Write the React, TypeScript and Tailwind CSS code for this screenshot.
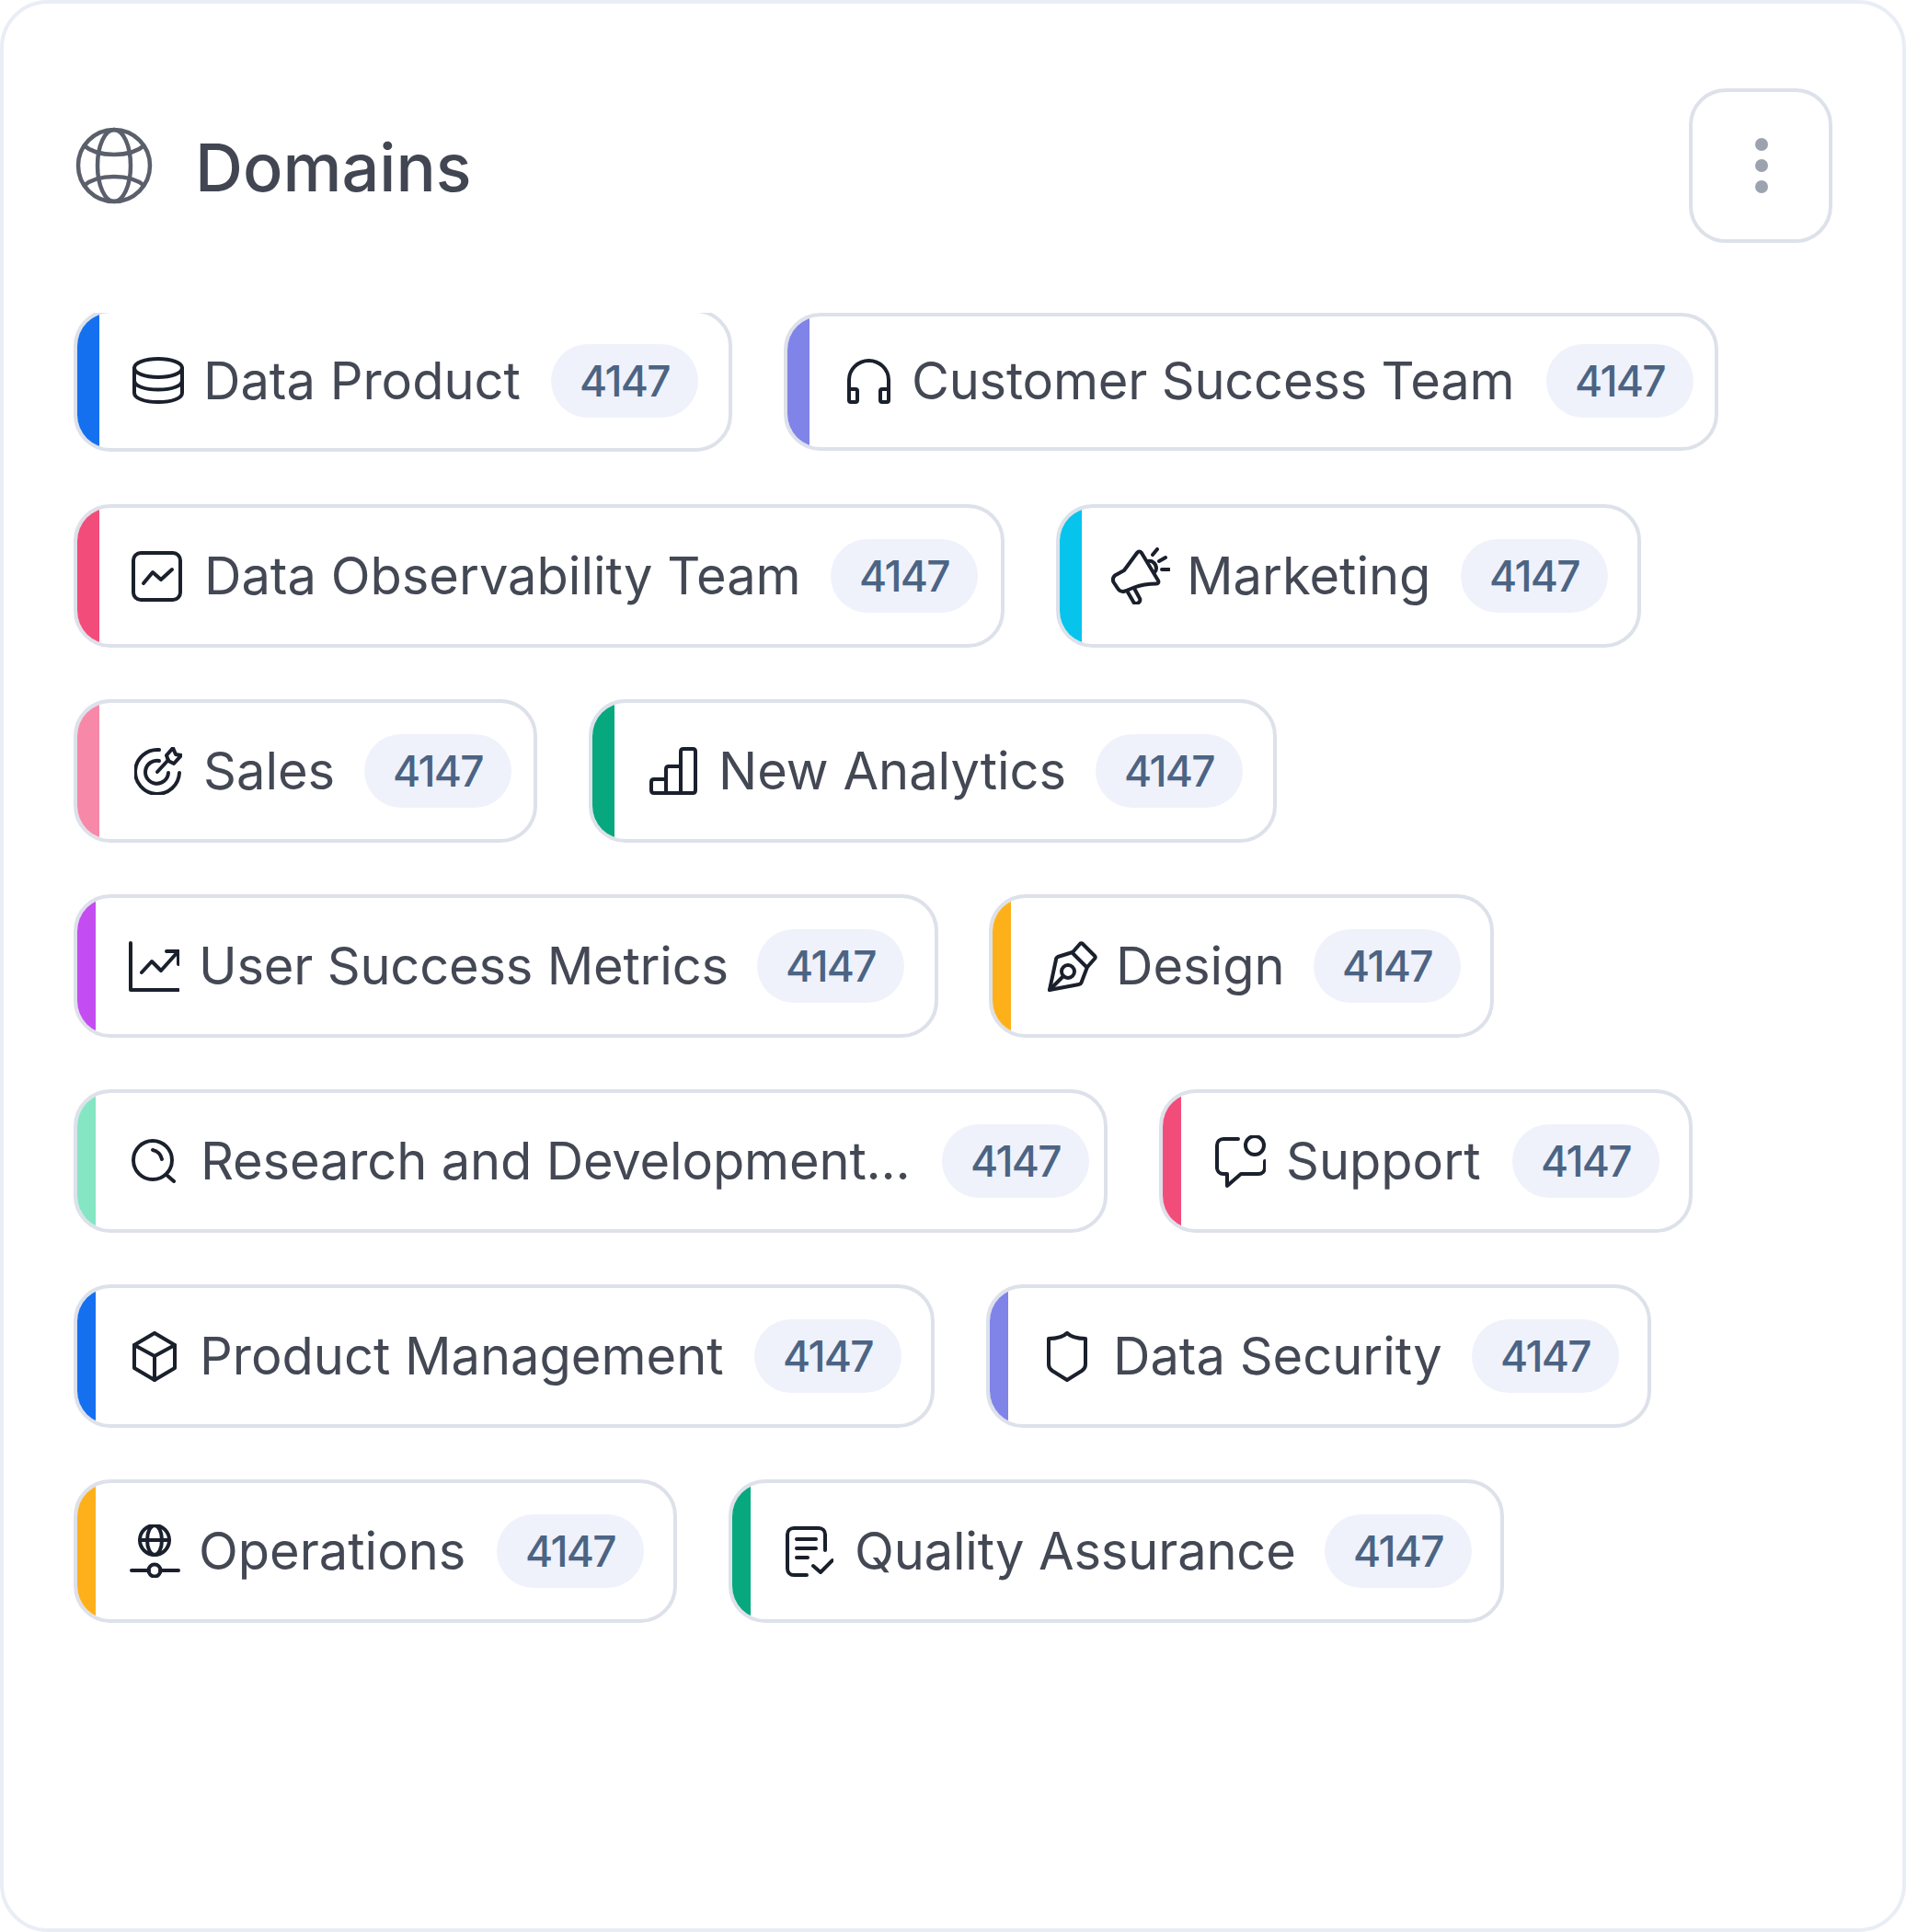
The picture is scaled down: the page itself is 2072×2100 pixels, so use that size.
import type { ReactNode } from 'react';

const stroke = {
  fill: 'none',
  stroke: '#1a202c',
  strokeWidth: 4,
  strokeLinecap: 'round' as const,
  strokeLinejoin: 'round' as const,
};

function Icon({ w, h, children }: { w: number; h: number; children: ReactNode }) {
  return (
    <svg width={w} height={h} viewBox={`0 0 ${w} ${h}`} className="flex-shrink-0" {...stroke}>
      {children}
    </svg>
  );
}

const DatabaseIcon = () => (
  <Icon w={56} h={51}>
    <ellipse cx="28" cy="12" rx="26" ry="10" />
    <path d="M2 12v27c0 6 11 10 26 10s26-4 26-10V12" />
    <path d="M2 25.5c0 6 11 10 26 10s26-4 26-10" />
  </Icon>
);

const HeadsetIcon = () => (
  <Icon w={49} h={49}>
    <path d="M3 35V23a21.500 21 0 0 1 43 0v12" />
    <rect x="3" y="33" width="9" height="14" rx="2" />
    <rect x="37" y="33" width="9" height="14" rx="2" />
  </Icon>
);

const ChartSquareIcon = () => (
  <Icon w={55} h={55}>
    <rect x="2" y="2" width="51" height="51" rx="8" />
    <path d="M13 35l10-12 9 8 12-11" />
  </Icon>
);

const MegaphoneIcon = () => (
  <Icon w={64} h={62}>
    <path d="M14 25L28 6c1.500-2 3.500-2 5 0l18 30c1 2 0 3.500-2 3.500-8 0-16 1-24 4l-10 4c-3 1-6 0-8-3l-4-6c-2-3-1-6 1-8z" />
    <path d="M17 47l7 12c1 2 3 2.500 5 1.500s3-3 2-5l-6-11" />
    <path d="M40 15c5-1 9 3 9 8 0 2-1 3-2 4" />
    <path d="M45 8l5-6M52 15l7-4M55 24h8" />
  </Icon>
);

const TargetIcon = () => (
  <Icon w={52} h={52}>
    <path d="M27 3a24 24 0 1 0 22 25" />
    <path d="M27 15a12.500 12.500 0 1 0 10 13" />
    <path d="M25 27l12-13" />
    <path d="M37 15l-2-6 7-8 3 7 6 1-8 9z" />
  </Icon>
);

const BarsIcon = () => (
  <Icon w={52} h={52}>
    <path d="M34 50V5c0-2 1-3 3-3h10c2 0 3 1 3 3v42c0 2-1 3-3 3H5c-2 0-3-1-3-3V38c0-2 1-3 3-3h13" />
    <path d="M18 50V24c0-2 1-3 3-3h13" />
  </Icon>
);

const TrendIcon = () => (
  <Icon w={55} h={55}>
    <path d="M2 2v51h52" />
    <path d="M14 34l11-12 10 10 18-20" />
    <path d="M41 11h13v14" />
  </Icon>
);

const PenIcon = () => (
  <Icon w={54} h={55}>
    <path d="M35 3c1-1 2-1 3 0l13 13c1 1 1 2 0 3l-7 8c-1 1-2 1-3 0L28 14c-1-1-1-2 0-3z" />
    <path d="M27 12l-16 5c-1 .500-2 1-2 3L2 53l32-6c1 0 2-1 2.500-2L43 28" />
    <path d="M2 53l15-15" />
    <circle cx="22" cy="33" r="7" />
  </Icon>
);

const SearchIcon = () => (
  <Icon w={48} h={48}>
    <circle cx="23" cy="23" r="21" />
    <path d="M38 39l8 7" />
    <path d="M23 12c5 1 9 5 10 10" />
  </Icon>
);

const SupportIcon = () => (
  <Icon w={55} h={57}>
    <circle cx="43" cy="11" r="10" />
    <path d="M25 4H9C5 4 2 7 2 11v24c0 4 3 7 7 7h4v13l15-13h19c4 0 7-3 7-7v-7" />
  </Icon>
);

const CubeIcon = () => (
  <Icon w={48} h={55}>
    <path d="M24 2l22 13v25L24 53 2 40V15z" />
    <path d="M2 15l22 12 22-12M24 27v26" />
  </Icon>
);

const ShieldIcon = () => (
  <Icon w={44} h={55}>
    <path d="M22 2c-4 4-10 6-20 6v28c0 3 1 5 4 7l16 10 16-10c3-2 4-4 4-7V8c-10 0-16-2-20-6z" />
  </Icon>
);

const NetworkIcon = () => (
  <Icon w={55} h={58}>
    <circle cx="27" cy="17" r="16" />
    <ellipse cx="27" cy="17" rx="8" ry="16" />
    <path d="M11 17h32" />
    <circle cx="27" cy="50" r="6.500" />
    <path d="M2 50h19M33 50h20" />
  </Icon>
);

const ReportIcon = () => (
  <Icon w={52} h={55}>
    <path d="M23 53H9c-4 0-7-3-7-7V9c0-4 3-7 7-7h27c4 0 7 3 7 7v17" />
    <path d="M12 14h21M12 24h21M12 34h12" />
    <path d="M30 43l8 7 13-13" />
  </Icon>
);

type Domain = {
  label: string;
  icon: ReactNode;
  chip: string;
  bar: string;
  iconGap: string;
  textGap: string;
  end: string;
};

const rows: Domain[][] = [
  [
    { label: 'Data Product', icon: <DatabaseIcon />, chip: 'w-[716px] -mt-[4px] h-[155px]', bar: 'w-[24px] bg-[#1570ef]', iconGap: 'ml-[36px]', textGap: 'ml-[21px]', end: 'mr-[33px]' },
    { label: 'Customer Success Team', icon: <HeadsetIcon />, chip: 'w-[1016px] -ml-[1px] h-[150px]', bar: 'w-[24px] bg-[#8083e8]', iconGap: 'ml-[40px] mb-[2px]', textGap: 'ml-[22px] mb-[2px] tracking-[-0.2px]', end: 'mr-[23px] mb-[2px]' },
  ],
  [
    { label: 'Data Observability Team', icon: <ChartSquareIcon />, chip: 'w-[1012px] h-[156px]', bar: 'w-[24px] bg-[#f24d7a]', iconGap: 'ml-[35px]', textGap: 'ml-[24px]', end: 'mr-[25px]' },
    { label: 'Marketing', icon: <MegaphoneIcon />, chip: 'w-[636px] -ml-[1px] h-[156px]', bar: 'w-[24px] bg-[#06c4ec]', iconGap: 'ml-[32px]', textGap: 'ml-[18px]', end: 'mr-[32px]' },
  ],
  [
    { label: 'Sales', icon: <TargetIcon />, chip: 'w-[504px] h-[156px]', bar: 'w-[24px] bg-[#f788a8]', iconGap: 'ml-[38px]', textGap: 'ml-[23px]', end: 'mr-[24px]' },
    { label: 'New Analytics', icon: <BarsIcon />, chip: 'w-[748px] -ml-[1px] h-[156px]', bar: 'w-[24px] bg-[#07a87d]', iconGap: 'ml-[38px]', textGap: 'ml-[23px]', end: 'mr-[33px]' },
  ],
  [
    { label: 'User Success Metrics', icon: <TrendIcon />, chip: 'w-[940px] h-[156px]', bar: 'w-[20px] bg-[#c34df0]', iconGap: 'ml-[36px]', textGap: 'ml-[21px] tracking-[-0.2px]', end: 'mr-[33px]' },
    { label: 'Design', icon: <PenIcon />, chip: 'w-[549px] -ml-[2px] h-[156px]', bar: 'w-[20px] bg-[#feb01b]', iconGap: 'ml-[40px]', textGap: 'ml-[20px]', end: 'mr-[32px]' },
  ],
  [
    { label: 'Research and Development...', icon: <SearchIcon />, chip: 'w-[1124px] h-[156px]', bar: 'w-[20px] bg-[#84e6c2]', iconGap: 'ml-[39px]', textGap: 'ml-[27px] tracking-[-0.15px]', end: 'mr-[16px]' },
    { label: 'Support', icon: <SupportIcon />, chip: 'w-[580px] -ml-[1px] h-[156px]', bar: 'w-[20px] bg-[#f24d7a]', iconGap: 'ml-[37px]', textGap: 'ml-[22px]', end: 'mr-[32px]' },
  ],
  [
    { label: 'Product Management', icon: <CubeIcon />, chip: 'w-[936px] h-[156px]', bar: 'w-[20px] bg-[#1570ef]', iconGap: 'ml-[40px]', textGap: 'ml-[25px]', end: 'mr-[32px]' },
    { label: 'Data Security', icon: <ShieldIcon />, chip: 'w-[723px] -ml-[1px] h-[156px]', bar: 'w-[20px] bg-[#8083e8]', iconGap: 'ml-[42px]', textGap: 'ml-[28px]', end: 'mr-[31px]' },
  ],
  [
    { label: 'Operations', icon: <NetworkIcon />, chip: 'w-[656px] h-[156px]', bar: 'w-[20px] bg-[#feb01b]', iconGap: 'ml-[37px]', textGap: 'ml-[20px]', end: 'mr-[32px]' },
    { label: 'Quality Assurance', icon: <ReportIcon />, chip: 'w-[843px] -ml-[1px] h-[156px]', bar: 'w-[20px] bg-[#07a87d]', iconGap: 'ml-[38px]', textGap: 'ml-[23px] tracking-[-0.15px]', end: 'mr-[31px]' },
  ],
];

function DomainChip({ domain }: { domain: Domain }) {
  return (
    <div className={`flex items-center flex-shrink-0 overflow-hidden bg-white border-4 border-[#dde1ea] rounded-[40px] ${domain.chip}`}>
      <div className={`self-stretch flex-shrink-0 ${domain.bar}`} />
      <div className={domain.iconGap}>{domain.icon}</div>
      <span className={`text-[56px] leading-none whitespace-nowrap text-[#434854] ${domain.textGap}`}>{domain.label}</span>
      <span className={`ml-auto flex items-center justify-center w-[160px] h-[80px] flex-shrink-0 rounded-full bg-[#eff2fb] text-[46px] tracking-[-1.7px] font-medium leading-none text-[#4c6484] ${domain.end}`}>
        4147
      </span>
    </div>
  );
}

export default function App() {
  return (
    <div className="w-[2072px] h-[2100px] bg-white border-4 border-[#e9edf5] rounded-[52px] px-[76px] pt-[92px] font-[Inter,sans-serif]">
      <div className="flex items-center justify-between mb-[76px]">
        <div className="flex items-center ml-[2px]">
          <svg width="84" height="84" viewBox="0 0 84 84" fill="none" stroke="#5a5f6b" strokeWidth="4.500">
            <circle cx="42" cy="42" r="39" />
            <ellipse cx="42" cy="42" rx="18" ry="39" />
            <path d="M9 20c8 7 20 10 33 10s25-3 33-10" />
            <path d="M9 64c8-7 20-10 33-10s25 3 33 10" />
          </svg>
          <h1 className="ml-[46px] mt-[3px] text-[72px] leading-none font-medium text-[#414652]">Domains</h1>
        </div>
        <button className="flex flex-col items-center justify-center gap-[9px] w-[156px] h-[168px] pl-[2px] bg-white border-4 border-[#dde1ea] rounded-[40px]">
          <span className="w-[14px] h-[14px] rounded-full bg-[#9ca3af]" />
          <span className="w-[14px] h-[14px] rounded-full bg-[#9ca3af]" />
          <span className="w-[14px] h-[14px] rounded-full bg-[#9ca3af]" />
        </button>
      </div>
      <div className="flex flex-col gap-[56px]">
        {rows.map((row, i) => (
          <div key={i} className={`flex items-start gap-[57px] ${i === 0 ? 'h-[152px] overflow-hidden' : ''}`}>
            {row.map((d) => (
              <DomainChip key={d.label} domain={d} />
            ))}
          </div>
        ))}
      </div>
    </div>
  );
}
